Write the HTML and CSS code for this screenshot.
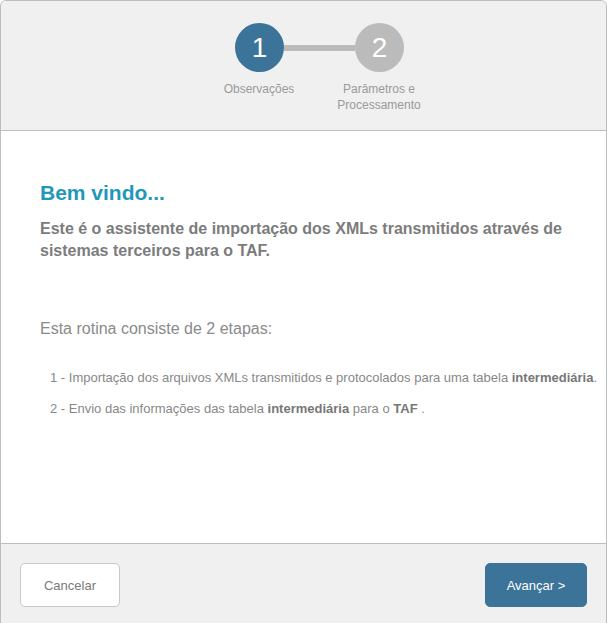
FILE: index.html
```html
<!DOCTYPE html>
<html lang="pt-BR">
<head>
    <meta charset="UTF-8">
    <meta name="viewport" content="width=device-width, initial-scale=1.0">
    <title>Assistente de importação</title>
    <link rel="stylesheet" href="styles.css">
</head>
<body>
    <div class="wizard">
        <div class="wizard-header">
            <div class="steps">
                <div class="track">
                    <div class="circle active">1</div>
                    <div class="line"></div>
                    <div class="circle">2</div>
                </div>
                <div class="labels">
                    <div class="label">Observações</div>
                    <div class="label">Parâmetros e<br>Processamento</div>
                </div>
            </div>
        </div>

        <div class="wizard-body">
            <h1 class="title">Bem vindo...</h1>
            <p class="intro">Este é o assistente de importação dos XMLs transmitidos através de sistemas terceiros para o TAF.</p>

            <p class="lead">Esta rotina consiste de 2 etapas:</p>

            <ul class="etapas">
                <li>1 - Importação dos arquivos XMLs transmitidos e protocolados para uma tabela <b>intermediária</b>.</li>
                <li>2 - Envio das informações das tabela <b>intermediária</b> para o <b>TAF</b> .</li>
            </ul>
        </div>

        <div class="wizard-footer">
            <button class="btn btn-cancel">Cancelar</button>
            <button class="btn btn-next">Avançar &gt;</button>
        </div>
    </div>
</body>
</html>
```

FILE: styles.css
```css
* {
    margin: 0;
    padding: 0;
    box-sizing: border-box;
}

body {
    font-family: "Liberation Sans", Arial, sans-serif;
    background-color: #fff;
}

.wizard {
    width: 607px;
    height: 623px;
    border: 1px solid #bdbdbd;
    border-bottom: none;
    border-radius: 6px 6px 0 0;
    display: flex;
    flex-direction: column;
    overflow: hidden;
}

.wizard-header {
    height: 130px;
    background-color: #f0f0f0;
    border-bottom: 1px solid #bdbdbd;
    padding: 22px 0 0 198px;
}

.track {
    display: flex;
    align-items: center;
    padding-left: 36px;
}

.circle {
    width: 49px;
    height: 49px;
    border-radius: 50%;
    background-color: #bbbbbb;
    color: #fff;
    font-size: 28px;
    line-height: 49px;
    text-align: center;
}

.circle.active {
    background-color: #3c7399;
}

.line {
    width: 71px;
    height: 6px;
    background-color: #bbbbbb;
}

.labels {
    display: flex;
    margin-top: 9px;
}

.label {
    width: 120px;
    text-align: center;
    font-size: 12px;
    line-height: 16px;
    color: #9a9a9a;
}

.wizard-body {
    flex: 1;
    padding: 49px 0 0 39px;
    color: #888;
}

.title {
    font-size: 21px;
    line-height: 26px;
    font-weight: bold;
    color: #1f98ba;
}

.intro {
    margin-top: 12px;
    font-size: 16px;
    line-height: 22px;
    font-weight: bold;
    color: #7c7c7c;
}

.lead {
    margin-top: 56px;
    font-size: 16px;
    line-height: 22px;
    color: #8a8a8a;
}

.etapas {
    list-style: none;
    margin-top: 29px;
    padding-left: 10px;
    font-size: 13px;
    line-height: 18px;
    color: #888;
}

.etapas li + li {
    margin-top: 13px;
}

.etapas b {
    color: #777;
}

.wizard-footer {
    height: 80px;
    background-color: #f0f0f0;
    border-top: 1px solid #bdbdbd;
    display: flex;
    justify-content: space-between;
    align-items: flex-start;
    padding: 19px 19px 0 19px;
}

.btn {
    height: 44px;
    border-radius: 5px;
    font-family: "Liberation Sans", Arial, sans-serif;
    font-size: 13px;
}

.btn-cancel {
    width: 100px;
    background-color: #fff;
    border: 1px solid #c8c8c8;
    color: #7a7a7a;
}

.btn-next {
    width: 102px;
    background-color: #3c7399;
    border: 1px solid #3c7399;
    color: #fff;
}
```
